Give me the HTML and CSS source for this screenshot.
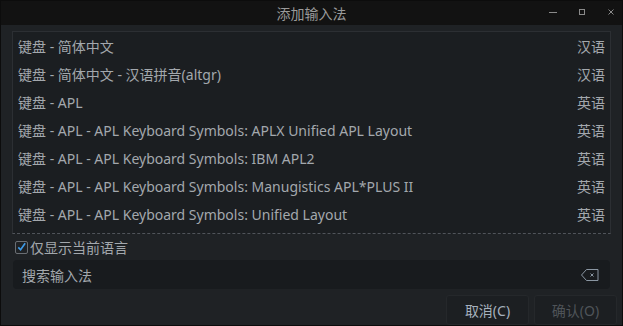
FILE: index.html
```html
<!DOCTYPE html>
<html lang="zh">

<head>
    <meta charset="UTF-8">
    <meta name="viewport" content="width=device-width, initial-scale=1.0">
    <title>添加输入法</title>
    <link rel="stylesheet" href="styles.css">
</head>

<body>
    <div class="window">
        <!-- 标题栏 -->
        <div class="titlebar">
            <div class="title">添加输入法</div>
            <div class="controls">
                <svg width="10" height="10" viewBox="0 0 10 10"><path d="M1 5.5h8" stroke="#8a8a8a" stroke-width="1"/></svg>
                <svg width="10" height="10" viewBox="0 0 10 10"><rect x="2.5" y="2.5" width="5" height="5" fill="none" stroke="#8a8a8a" stroke-width="1"/></svg>
                <svg width="10" height="10" viewBox="0 0 10 10"><path d="M2.5 2.5l5 5M7.5 2.5l-5 5" stroke="#8a8a8a" stroke-width="1"/></svg>
            </div>
        </div>

        <div class="content">
            <div class="im-list">
                <div class="im-row"><span>键盘 - 简体中文</span><span>汉语</span></div>
                <div class="im-row"><span>键盘 - 简体中文 - 汉语拼音(altgr)</span><span>汉语</span></div>
                <div class="im-row"><span>键盘 - APL</span><span>英语</span></div>
                <div class="im-row"><span>键盘 - APL - APL Keyboard Symbols: APLX Unified APL Layout</span><span>英语</span></div>
                <div class="im-row"><span>键盘 - APL - APL Keyboard Symbols: IBM APL2</span><span>英语</span></div>
                <div class="im-row"><span>键盘 - APL - APL Keyboard Symbols: Manugistics APL*PLUS II</span><span>英语</span></div>
                <div class="im-row"><span>键盘 - APL - APL Keyboard Symbols: Unified Layout</span><span>英语</span></div>
            </div>

            <label class="only-current">
                <span class="checkbox">
                    <svg width="12" height="12" viewBox="0 0 12 12"><path d="M2.5 6.5l2.5 2.5 5-7" fill="none" stroke="#3d9be9" stroke-width="1.8"/></svg>
                </span>
                仅显示当前语言
            </label>

            <div class="search">
                <span>搜索输入法</span>
                <svg width="18" height="12" viewBox="0 0 18 12"><path d="M5.5 0.5h11.5v11h-11.5l-5-5.5z" fill="none" stroke="#8a96a2" stroke-width="1"/><path d="M9.5 4.5l3 3M12.5 4.5l-3 3" stroke="#8a96a2" stroke-width="1"/></svg>
            </div>

            <div class="buttons">
                <div class="btn">取消(C)</div>
                <div class="btn disabled">确认(O)</div>
            </div>
        </div>
    </div>
</body>

</html>
```

FILE: styles.css
```css
body {
    margin: 0;
    padding: 0;
    background: #000;
    font-family: "Noto Sans", "Noto Sans CJK SC", sans-serif;
    overflow: hidden;
}

.window {
    width: 623px;
    height: 326px;
    box-sizing: border-box;
    border: 1px solid #0c0c0c;
    background: #1f2225;
    display: flex;
    flex-direction: column;
}

.titlebar {
    height: 24px;
    background: #121212;
    display: flex;
    align-items: center;
    justify-content: center;
    position: relative;
}

.title {
    color: #9a9a9a;
    font-size: 14px;
}

.controls {
    position: absolute;
    right: 6px;
    top: 6px;
    display: flex;
    gap: 19px;
}

.content {
    flex: 1;
    padding: 6px 11px 0 11px;
    display: flex;
    flex-direction: column;
}

.im-list {
    height: 201px;
    border: 1px solid #2c2f33;
    border-bottom: 1px dashed #50545a;
    background: #1b1e21;
}

.im-row {
    height: 28px;
    display: flex;
    align-items: center;
    justify-content: space-between;
    padding: 0 5px 0 5px;
    color: #a3a8ad;
    font-size: 14px;
}

.only-current {
    display: flex;
    align-items: center;
    height: 26px;
    color: #a3a8ad;
    font-size: 14px;
    padding-left: 3px;
}

.checkbox {
    width: 11px;
    height: 11px;
    border: 1px solid #6a6e73;
    border-radius: 2px;
    margin-right: 2px;
    display: flex;
    align-items: center;
    justify-content: center;
}

.search {
    height: 29px;
    margin: 0 1px;
    background: #181b1e;
    border-radius: 4px;
    display: flex;
    align-items: center;
    justify-content: space-between;
    padding: 0 11px 0 9px;
    color: #a3a8ad;
    font-size: 14px;
}

.buttons {
    display: flex;
    justify-content: flex-end;
    gap: 5px;
    margin-top: 6px;
    margin-right: -6px;
}

.btn {
    width: 83px;
    height: 30px;
    box-sizing: border-box;
    border: 1px solid #25282b;
    border-radius: 3px;
    background: #1c1f22;
    color: #a6b1bd;
    font-size: 14px;
    display: flex;
    align-items: center;
    justify-content: center;
}

.btn.disabled {
    color: #4f5459;
}
```
